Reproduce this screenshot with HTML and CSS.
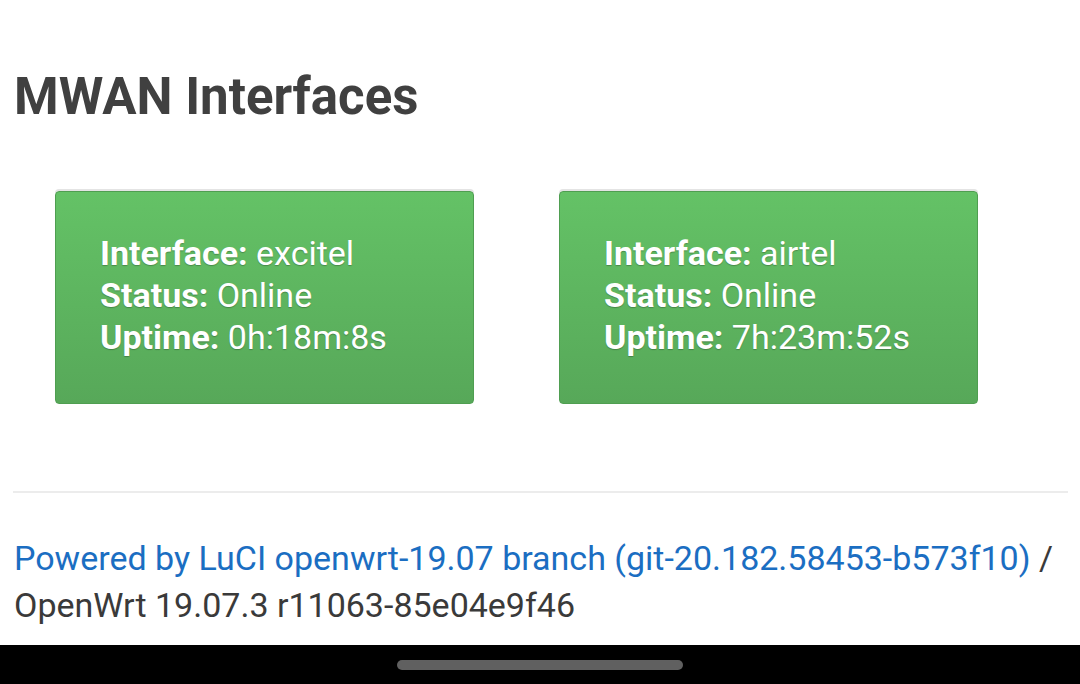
FILE: index.html
```html
<!DOCTYPE html>
<html>
<head>
	<meta charset="utf-8">
	<title>MWAN Interfaces</title>
	<link rel="stylesheet" href="styles.css">
</head>
<body>
	<div class="page">
		<h2 class="title">MWAN Interfaces</h2>

		<div class="cards">
			<div class="card">
				<div><strong>Interface:</strong> excitel</div>
				<div><strong>Status:</strong> Online</div>
				<div><strong>Uptime:</strong> 0h:18m:8s</div>
			</div>
			<div class="card">
				<div><strong>Interface:</strong> airtel</div>
				<div><strong>Status:</strong> Online</div>
				<div><strong>Uptime:</strong> 7h:23m:52s</div>
			</div>
		</div>

		<hr class="sep">

		<footer class="footer">
			<div><a href="#">Powered by LuCI openwrt-19.07 branch (git-20.182.58453-b573f10)</a> <span>/</span></div>
			<div>OpenWrt 19.07.3 r11063-85e04e9f46</div>
		</footer>
	</div>

	<div class="navbar">
		<div class="pill"></div>
	</div>
</body>
</html>
```

FILE: styles.css
```css
html, body {
    margin: 0;
    padding: 0;
    background: #fff;
}

body {
    font-family: Roboto, "Noto Sans", Arial, sans-serif;
    color: #404040;
    height: 684px;
    display: flex;
    flex-direction: column;
    overflow: hidden;
}

.page {
    flex: 1;
    padding: 0 12px 0 14px;
}

.title {
    margin: 64px 0 0 0;
    font-size: 51px;
    line-height: 66px;
    font-weight: bold;
    color: #404040;
}

.cards {
    display: flex;
    gap: 85px;
    margin: 61px 0 0 41px;
}

.card {
    width: 373px;
    height: 171px;
    padding: 40px 0 0 44px;
    box-sizing: content-box;
    border: 1px solid #4f9e51;
    border-radius: 4px;
    background: linear-gradient(to bottom, #64c266 0%, #57a859 100%);
    box-shadow: 0 -2px 0 #e4e4e4;
    color: #fff;
    font-size: 34px;
    line-height: 42px;
    text-shadow: 0 1px 1px rgba(0, 0, 0, 0.25);
}

.card strong {
    font-weight: bold;
}

.sep {
    margin: 87px 0 0 -1px;
    border: none;
    border-top: 2px solid #ececec;
}

.footer {
    margin-top: 42px;
    font-size: 34px;
    line-height: 47px;
    color: #3a3a3a;
}

.footer a {
    color: #1b6ec2;
    text-decoration: none;
}

.navbar {
    height: 39px;
    background: #000;
    display: flex;
    justify-content: center;
    align-items: center;
}

.pill {
    width: 286px;
    height: 10px;
    border-radius: 5px;
    background: #606060;
}
```
